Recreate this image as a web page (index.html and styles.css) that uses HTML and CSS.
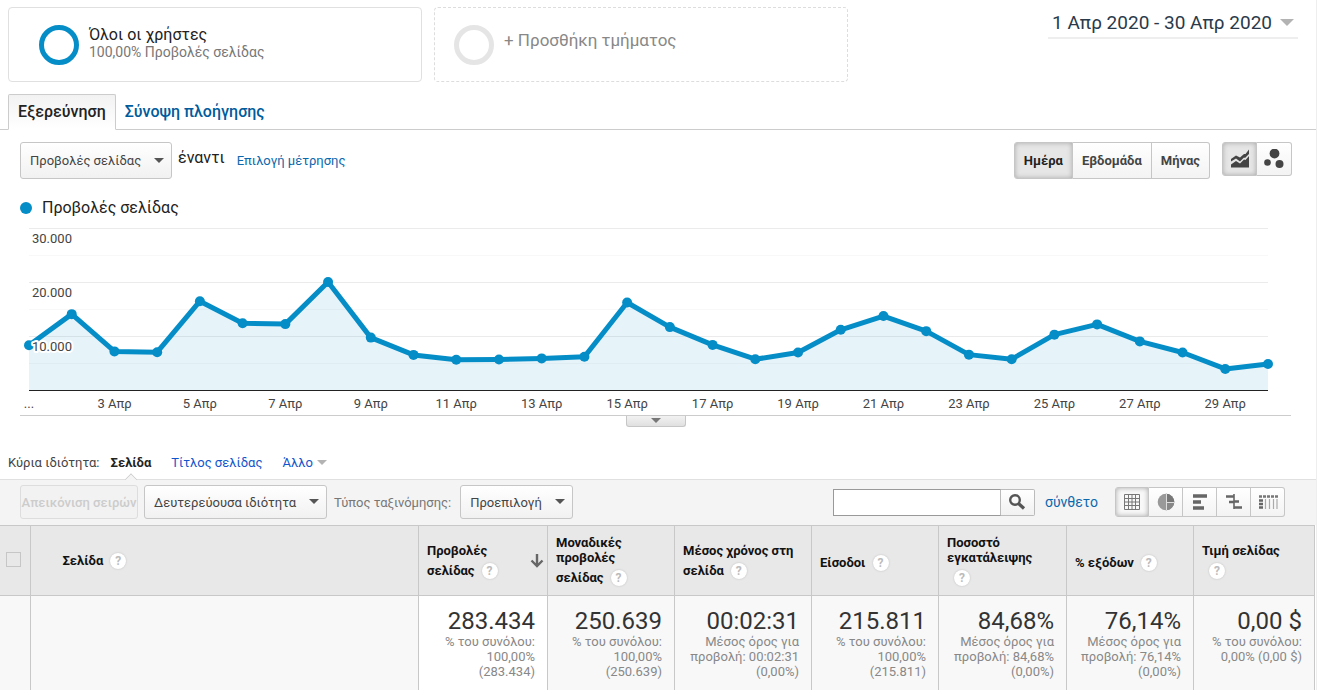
FILE: index.html
```html
<!DOCTYPE html>
<html lang="el">
<head>
<meta charset="utf-8">
<title>Σελίδες - Analytics</title>
<link rel="stylesheet" href="styles.css">
</head>
<body>
<main class="page">
  <header class="top">
    <section class="segment">
      <span class="ring ring-active"></span>
      <div class="segment-text">
        <div class="segment-name">Όλοι οι χρήστες</div>
        <div class="segment-note">100,00% Προβολές σελίδας</div>
      </div>
    </section>
    <button type="button" class="segment segment-add">
      <span class="ring"></span>
      <span class="add-label">+ Προσθήκη τμήματος</span>
    </button>
    <button type="button" class="date-range">1 Απρ 2020 - 30 Απρ 2020<span class="caret caret-large"></span></button>
  </header>

  <nav class="tabs">
    <a class="tab tab-active" href="#explorer">Εξερεύνηση</a>
    <a class="tab" href="#summary">Σύνοψη πλοήγησης</a>
  </nav>

  <section class="chart-controls">
    <span class="select select-metric">
      <select aria-label="Μέτρηση"><option>Προβολές σελίδας</option></select>
      <span class="caret caret-dark"></span>
    </span>
    <span class="versus">έναντι</span>
    <a class="link pick" href="#metric">Επιλογή μέτρησης</a>
    <div class="group period">
      <button type="button" class="pressed">Ημέρα</button>
      <button type="button">Εβδομάδα</button>
      <button type="button">Μήνας</button>
    </div>
    <div class="group chart-type">
      <button type="button" class="pressed" aria-label="Γράφημα γραμμής">
        <svg width="20" height="20" viewBox="0 0 20 20"><path d="M1 18.500V15.500L6 12l4 2.500 4-4 1.500.5L19 7v11.500z" fill="#444"/><path d="M1 12.500V10L6 6.500 10 8.500l4-3.500h1.500L19 .5V5l-4 4-1-.5-4 4L6 9.500z" fill="#444"/></svg>
      </button>
      <button type="button" aria-label="Γράφημα κίνησης">
        <svg width="20" height="20" viewBox="0 0 20 20"><circle cx="10.500" cy="4.500" r="4.900" fill="#444"/><circle cx="3.500" cy="13.500" r="3.300" fill="#444"/><circle cx="15.500" cy="15" r="4" fill="#444"/></svg>
      </button>
    </div>
  </section>

  <section class="chart">
    <h2 class="legend"><span class="dot"></span>Προβολές σελίδας</h2>
    <svg class="plot" viewBox="0 0 1271 193" role="img" aria-label="Προβολές σελίδας ανά ημέρα">
      <path d="M9 33.500H1248M9 87.500H1248M9 141.500H1248" stroke="#f8f8f8"/>
      <path d="M9 6.500H1248M9 60.500H1248M9 114.500H1248" stroke="#ebebeb"/>
      <g id="series"></g>
      <path d="M9 168.500H1248" stroke="#222"/>
      <g class="y-labels">
        <text x="12" y="21">30.000</text>
        <text x="12" y="75">20.000</text>
        <text x="12" y="129">10.000</text>
      </g>
      <g class="x-labels" id="days"><text x="9" y="186">...</text></g>
    </svg>
    <div class="chart-foot"><button type="button" class="drawer" aria-label="Σχολιασμοί"><span class="caret caret-small"></span></button></div>
  </section>

  <nav class="dimensions">
    <span>Κύρια ιδιότητα:</span>
    <strong class="current">Σελίδα</strong>
    <a href="#title">Τίτλος σελίδας</a>
    <a href="#other">Άλλο<span class="caret"></span></a>
  </nav>

  <section class="toolbar">
    <button type="button" class="plot-rows" disabled>Απεικόνιση σειρών</button>
    <span class="select select-secondary">
      <select aria-label="Δευτερεύουσα ιδιότητα"><option>Δευτερεύουσα ιδιότητα</option></select>
      <span class="caret caret-dark"></span>
    </span>
    <label class="sort-label" for="sort">Τύπος ταξινόμησης:</label>
    <span class="select select-sort">
      <select id="sort"><option>Προεπιλογή</option></select>
      <span class="caret caret-dark"></span>
    </span>
    <form class="search">
      <input type="text" aria-label="Αναζήτηση">
      <button type="button" aria-label="Εκτέλεση αναζήτησης">
        <svg width="18" height="18" viewBox="0 0 18 18"><circle cx="7" cy="7" r="4.800" fill="none" stroke="#555" stroke-width="2.400"/><path d="M10.500 10.500l5.500 5" stroke="#555" stroke-width="3.200"/></svg>
      </button>
    </form>
    <a class="link advanced" href="#advanced">σύνθετο</a>
    <div class="group views">
      <button type="button" class="pressed" aria-label="Πίνακας">
        <svg width="18" height="18" viewBox="0 0 18 18"><path d="M1.500 1.500h15v15h-15zM5.500 1.500v15M9 1.500v15M12.500 1.500v15M1.500 5.500h15M1.500 9h15M1.500 12.500h15" fill="none" stroke="#777"/></svg>
      </button>
      <button type="button" aria-label="Ποσοστό">
        <svg width="18" height="18" viewBox="0 0 18 18"><circle cx="9" cy="9" r="8.300" fill="#999"/><path d="M9 .7A8.300 8.300 0 0 1 17.300 9H9z" fill="#777"/><path d="M17.300 9A8.300 8.300 0 0 1 9 17.300V9z" fill="#888"/><path d="M9.500 1v16M9.500 9.500h8" fill="none" stroke="#ddd"/></svg>
      </button>
      <button type="button" aria-label="Απόδοση">
        <svg width="18" height="18" viewBox="0 0 18 18"><path d="M2 3h14M2 9h8M2 15h11" stroke="#666" stroke-width="3.400"/></svg>
      </button>
      <button type="button" aria-label="Σύγκριση">
        <svg width="18" height="18" viewBox="0 0 18 18"><path d="M1 3.500h8M4 9h5M9 8.500h5M9 14.500h8" stroke="#666" stroke-width="2.400"/><path d="M9 1v15" stroke="#666" stroke-width="1.600"/></svg>
      </button>
      <button type="button" aria-label="Συγκεντρωτικός πίνακας">
        <svg width="20" height="18" viewBox="0 0 20 18"><path d="M1 3.500h19" stroke="#777" stroke-width="2.600" stroke-dasharray="3 1"/><path d="M1 7.500h4M1 11h4M1 14.500h4" stroke="#666" stroke-width="2.400"/><path d="M7.500 6v10M11.500 6v10M15.500 6v10M19 6v10" stroke="#aaa" stroke-width="1.200"/></svg>
      </button>
    </div>
  </section>

  <table class="report">
    <colgroup><col class="c-check"><col class="c-page"><col class="c-views"><col class="c-unique"><col class="c-time"><col class="c-entry"><col class="c-bounce"><col class="c-exit"><col class="c-value"></colgroup>
    <thead>
      <tr>
        <th><input type="checkbox" aria-label="Επιλογή όλων"></th>
        <th class="page-head">Σελίδα<span class="help">?</span></th>
        <th><div class="sorted"><span>Προβολές σελίδας<span class="help">?</span></span>
          <svg width="14" height="14" viewBox="0 0 14 14"><path d="M7 0v12M1.500 6.500L7 12l5.500-5.500" fill="none" stroke="#666" stroke-width="2.400"/></svg></div></th>
        <th>Μοναδικές προβολές σελίδας<span class="help">?</span></th>
        <th>Μέσος χρόνος στη σελίδα<span class="help">?</span></th>
        <th>Είσοδοι<span class="help">?</span></th>
        <th>Ποσοστό εγκατάλειψης<span class="help">?</span></th>
        <th>% εξόδων<span class="help">?</span></th>
        <th>Τιμή σελίδας<span class="help">?</span></th>
      </tr>
    </thead>
    <tbody>
      <tr>
        <td></td>
        <td></td>
        <td class="sorted-cell"><div class="total">283.434</div>% του συνόλου: 100,00% (283.434)</td>
        <td><div class="total">250.639</div>% του συνόλου: 100,00% (250.639)</td>
        <td><div class="total">00:02:31</div>Μέσος όρος για προβολή: 00:02:31 (0,00%)</td>
        <td><div class="total">215.811</div>% του συνόλου: 100,00% (215.811)</td>
        <td><div class="total">84,68%</div>Μέσος όρος για προβολή: 84,68% (0,00%)</td>
        <td><div class="total">76,14%</div>Μέσος όρος για προβολή: 76,14% (0,00%)</td>
        <td><div class="total">0,00 $</div>% του συνόλου: 0,00% (0,00 $)</td>
      </tr>
    </tbody>
  </table>
</main>
<script src="chart.js"></script>
</body>
</html>
```
FILE: chart.js
```js
// Daily page views, 1-30 April.
const views = [8300, 14050, 7150, 7000, 16450, 12350, 12200, 20000, 9700, 6500,
  5600, 5650, 5850, 6150, 16200, 11650, 8350, 5700, 6950, 11150,
  13700, 10900, 6550, 5700, 10250, 12150, 9000, 6950, 3900, 4800];
const NS = 'http://www.w3.org/2000/svg';
const x = i => 9 + i * 1239 / 29;
const y = v => 168 - v * 54 / 10000;
const add = (parent, name, attrs, text) => {
  const el = document.createElementNS(NS, name);
  for (const key in attrs) el.setAttribute(key, attrs[key]);
  if (text) el.textContent = text;
  parent.appendChild(el);
};
const series = document.getElementById('series');
const days = document.getElementById('days');
const line = views.map((v, i) => x(i) + ',' + y(v)).join(' ');
add(series, 'polygon', { points: '9,168 ' + line + ' 1248,168', class: 'area' });
add(series, 'polyline', { points: line, class: 'line' });
views.forEach((v, i) => {
  add(series, 'circle', { cx: x(i), cy: y(v), r: 5, class: 'point' });
  if (i > 0 && i % 2 === 0) add(days, 'text', { x: x(i), y: 186 }, (i + 1) + ' Απρ');
});
```
FILE: styles.css
```css
* { box-sizing: border-box; }
body { margin: 0; background: #fff; color: #222; font: 13px/15px Roboto, "Noto Sans", sans-serif; overflow: hidden; }
button, input, select { font: inherit; color: inherit; margin: 0; }
a { text-decoration: none; }
.page { border-right: 1px solid #eee; }

.caret { display: inline-block; border: 5px solid transparent; border-top-color: #b3b3b3; border-bottom: 0; }
.caret-large { border-width: 7px 7px 0; }
.caret-dark { border-top-color: #555; }
.caret-small { border-top-color: #777; }

.top { display: flex; align-items: flex-start; gap: 12px; padding: 7px 18px 0 8px; }
.segment { display: flex; gap: 10px; flex: 0 1 414px; height: 75px; padding: 17px 30px; border: 1px solid #e0e0e0; border-radius: 4px; background: #fff; text-align: left; }
.segment-add { padding-left: 19px; border: 1px dashed #ddd; color: #888; }
.ring { flex: none; width: 40px; height: 40px; border: 5px solid #e5e5e5; border-radius: 50%; }
.ring-active { border-color: #058dc7; }
.segment-name { font-size: 16px; line-height: 20px; color: #222; }
.segment-note { font-size: 14px; line-height: 15px; color: #777; }
.add-label { font-size: 17px; line-height: 30px; }
.date-range { display: flex; align-items: center; gap: 8px; margin-left: auto; padding: 0 4px; height: 32px; border: 0; border-bottom: 2px solid #eee; background: none; font-size: 19px; color: #2a3a4a; white-space: nowrap; }

.tabs { display: flex; height: 36px; margin-top: 12px; padding-left: 8px; border-bottom: 1px solid #ccc; }
.tab { height: 36px; padding: 1px 9px 0; font-size: 16px; line-height: 34px; font-weight: 500; color: #005c9c; }
.tab-active { padding-top: 0; border: 1px solid #ccc; border-bottom-color: #fff; border-radius: 2px 2px 0 0; background: linear-gradient(#f2f2f2, #fff); color: #222; }

.select { position: relative; display: block; flex: none; }
.select select { width: 100%; height: 100%; padding: 0 9px; border: 1px solid #c6c6c6; border-radius: 3px; background: linear-gradient(#fff, #f1f1f1); appearance: none; color: #444; }
.select .caret { position: absolute; right: 8px; top: calc(50% - 3px); pointer-events: none; }
.link { color: #0a68ad; }

.chart-controls { display: flex; align-items: flex-start; padding: 12px 24px 0 20px; }
.select-metric { width: 152px; height: 37px; }
.versus { margin-left: 6px; font-size: 16px; line-height: 32px; }
.pick { margin-left: 12px; line-height: 38px; }
.group { display: flex; }
.group button { display: flex; align-items: center; justify-content: center; padding: 0; border: 1px solid #c6c6c6; border-left-width: 0; background: linear-gradient(#fff, #f3f3f3); color: #444; }
.group button:first-child { border-left-width: 1px; border-radius: 3px 0 0 3px; }
.group button:last-child { border-radius: 0 3px 3px 0; }
.group .pressed { background: #e6e6e6; box-shadow: inset 0 0 5px #aaa; color: #222; }
.period { margin-left: auto; }
.period button { height: 37px; padding: 0 9px; font-weight: bold; }
.chart-type { margin-left: 12px; }
.chart-type button { width: 35px; height: 34px; }

.chart { padding: 0 25px 0 20px; }
.legend { display: flex; align-items: center; gap: 10px; margin: 17px 0 3px; font-size: 16px; line-height: 22px; font-weight: 400; }
.dot { width: 12px; height: 12px; border-radius: 50%; background: #058dc7; }
.plot { display: block; width: 100%; overflow: visible; fill: #444; font-size: 13px; }
.area { fill: #058dc7; fill-opacity: .1; }
.line { fill: none; stroke: #058dc7; stroke-width: 5; stroke-linejoin: round; }
.point { fill: #058dc7; }
.y-labels { stroke: #fff; stroke-width: 4; stroke-linejoin: round; paint-order: stroke; }
.x-labels { text-anchor: middle; }
.chart-foot { display: flex; justify-content: center; border-top: 1px solid #ccc; height: 40px; }
.drawer { display: flex; justify-content: center; width: 60px; height: 11px; padding: 2px 0 0; border: 1px solid #c6c6c6; border-top: 0; border-radius: 0 0 3px 3px; background: linear-gradient(#f2f2f2, #e0e0e0); }

.dimensions { display: flex; padding: 0 8px; height: 24px; line-height: 16px; color: #444; }
.dimensions strong { position: relative; margin: 0 20px 0 11px; font-weight: 700; color: #222; }
.current::after { content: ""; position: absolute; left: calc(50% - 5px); bottom: -6px; width: 9px; height: 9px; border: solid #ccc; border-width: 1px 0 0 1px; background: #f4f4f4; transform: rotate(45deg); clip-path: polygon(0 0, 100% 0, 0 100%); }
.dimensions a { margin-right: 20px; color: #15c; }
.dimensions .caret { margin: 0 0 2px 4px; }

.toolbar { display: flex; align-items: center; height: 46px; padding: 0 31px 1px 20px; border-top: 1px solid #e0e0e0; background: #f4f4f4; }
.plot-rows { flex: none; width: 118px; height: 34px; padding: 0; border: 1px solid #ddd; border-radius: 3px; background: #f2f2f2; color: #ccc; font-weight: 500; white-space: nowrap; }
.select-secondary { width: 183px; height: 34px; margin-left: 6px; }
.sort-label { margin: 0 9px 0 7px; color: #777; }
.select-sort { width: 113px; height: 34px; }
.search { display: flex; margin-left: auto; height: 27px; }
.search input { width: 168px; padding: 0 6px; border: 1px solid #999; border-right-color: #bbb; border-radius: 0; background: #fff; }
.search button { display: flex; align-items: center; justify-content: center; width: 34px; padding: 0; border: 1px solid #bbb; border-left: 0; border-radius: 0 2px 2px 0; background: linear-gradient(#fff, #f1f1f1); }
.advanced { margin: 0 17px 0 10px; font-size: 14px; }
.views button { width: 34px; height: 30px; }
.views .pressed { background: #f8f8f8; }

.report { width: calc(100% - 1px); table-layout: fixed; border-collapse: collapse; }
.c-check { width: 30px; }
.c-views { width: 129px; }
.c-unique, .c-entry { width: 127px; }
.c-time { width: 137px; }
.c-bounce { width: 128px; }
.c-exit { width: 127px; }
.c-value { width: 121px; }
.report th, .report td { border: 1px solid #c8c8c8; }
.report th:first-child, .report td:first-child { border-left: 0; }
.report th { height: 70px; padding: 0 8px; background: #e8e8e8; color: #111; text-align: left; font-weight: bold; }
.report th:first-child { padding: 0 6px 2px; }
.report .page-head { padding: 0 8px 4px 32px; }
.report input { display: block; width: 15px; height: 15px; border: 1px solid #c6c6c6; appearance: none; }
.help { display: inline-block; width: 16px; height: 16px; margin: 5px 7px 0; border-radius: 50%; background: #fff; box-shadow: 0 0 2px #bbb; color: #bbb; font-size: 12px; line-height: 16px; text-align: center; }
.sorted { display: flex; align-items: center; justify-content: space-between; margin-right: -5px; }
.sorted svg { flex: none; }
.report td { height: 96px; padding: 12px 12px 10px; background: #f8f8f8; color: #888; text-align: right; vertical-align: top; }
.report .sorted-cell { background: #fff; }
.total { font-size: 24px; line-height: 26px; color: #333; }
```
